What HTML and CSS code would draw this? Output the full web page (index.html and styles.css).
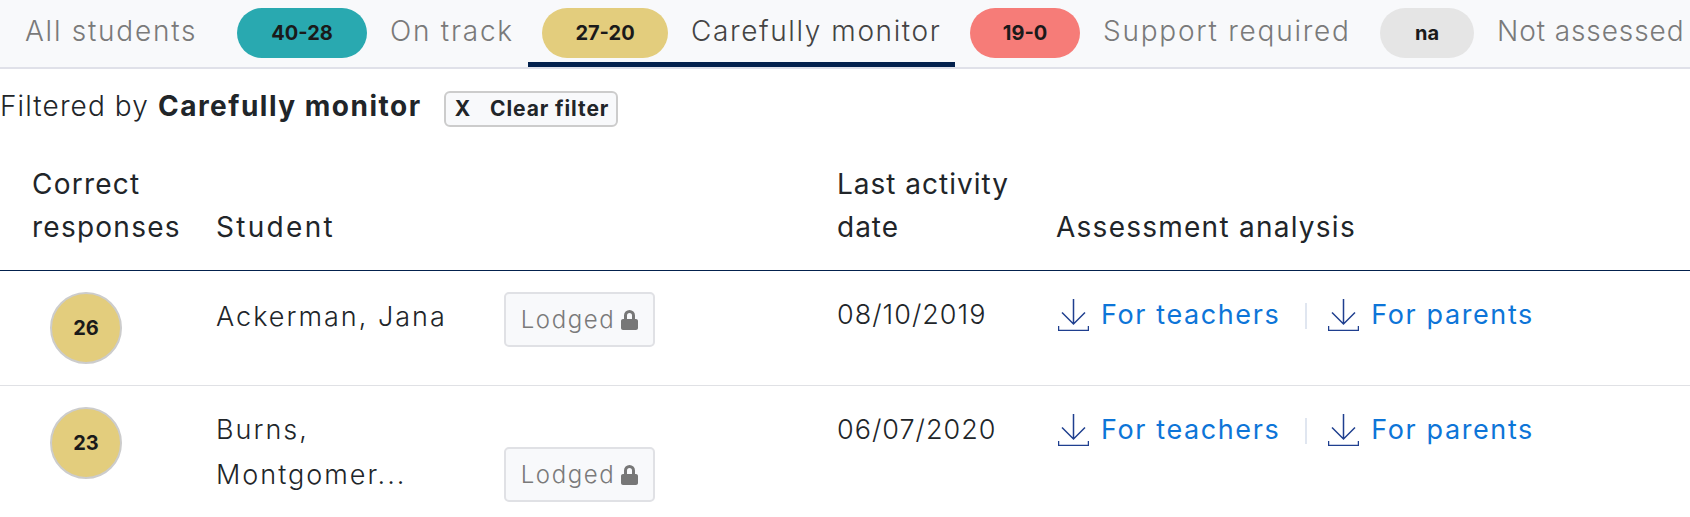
FILE: index.html
```html
<!DOCTYPE html>
<html lang="en">
<head>
<meta charset="utf-8">
<title>Assessment results</title>
<link rel="stylesheet" href="styles.css">
</head>
<body>
<nav class="tabs">
  <div class="tab tab-all"><span class="label">All students</span></div>
  <div class="tab tab-track"><span class="pill pill-teal">40-28</span><span class="label">On track</span></div>
  <div class="tab tab-monitor active"><span class="pill pill-gold">27-20</span><span class="label">Carefully monitor</span></div>
  <div class="tab tab-support"><span class="pill pill-red">19-0</span><span class="label">Support required</span></div>
  <div class="tab tab-none"><span class="pill pill-grey">na</span><span class="label label-tight">Not assessed</span></div>
</nav>
<div class="filter">
  <span class="filter-text">Filtered by <b>Carefully monitor</b></span>
  <button class="clear"><span class="clear-x">X</span><span>Clear filter</span></button>
</div>
<div class="row head">
  <div class="c-score">Correct<br>responses</div>
  <div class="c-student">Student</div>
  <div class="c-date">Last activity<br>date</div>
  <div class="c-analysis">Assessment analysis</div>
</div>
<div class="row body-row">
  <div class="c-score"><span class="score">26</span></div>
  <div class="c-student student-cell"><span class="name name-single">Ackerman, Jana</span><span class="lodged">Lodged<svg class="lock" viewBox="0 0 17 20"><path d="M3 9V5.500a5.500 5.500 0 0 1 11 0V9h1c1.100 0 2 .9 2 2v7c0 1.100-.9 2-2 2H2c-1.100 0-2-.9-2-2v-7c0-1.100.9-2 2-2zm3 0h5V5.500a2.500 2.500 0 0 0-5 0z"/></svg></span></div>
  <div class="c-date">08/10/2019</div>
  <div class="c-analysis links">
    <a class="dl"><svg class="dl-icon" viewBox="0 0 31 32"><path d="M15.500 0v25M4 13.500 15.500 25 27 13.500M.5 27v4.500h30V27"/></svg>For teachers</a>
    <span class="sep"></span>
    <a class="dl"><svg class="dl-icon" viewBox="0 0 31 32"><path d="M15.500 0v25M4 13.500 15.500 25 27 13.500M.5 27v4.500h30V27"/></svg>For parents</a>
  </div>
</div>
<div class="row body-row">
  <div class="c-score"><span class="score">23</span></div>
  <div class="c-student student-cell"><span class="name">Burns,<br>Montgomer...</span><span class="lodged">Lodged<svg class="lock" viewBox="0 0 17 20"><path d="M3 9V5.500a5.500 5.500 0 0 1 11 0V9h1c1.100 0 2 .9 2 2v7c0 1.100-.9 2-2 2H2c-1.100 0-2-.9-2-2v-7c0-1.100.9-2 2-2zm3 0h5V5.500a2.500 2.500 0 0 0-5 0z"/></svg></span></div>
  <div class="c-date">06/07/2020</div>
  <div class="c-analysis links">
    <a class="dl"><svg class="dl-icon" viewBox="0 0 31 32"><path d="M15.500 0v25M4 13.500 15.500 25 27 13.500M.5 27v4.500h30V27"/></svg>For teachers</a>
    <span class="sep"></span>
    <a class="dl"><svg class="dl-icon" viewBox="0 0 31 32"><path d="M15.500 0v25M4 13.500 15.500 25 27 13.500M.5 27v4.500h30V27"/></svg>For parents</a>
  </div>
</div>
</body>
</html>
```
FILE: styles.css
```css
* { box-sizing: border-box; }
html, body { height: 517px; overflow: hidden; }
body {
  margin: 0;
  background: #fff;
  color: #212529;
  font-family: Inter, "Liberation Sans", sans-serif;
  font-size: 27px;
  font-weight: 300;
}
.tabs {
  display: flex;
  height: 69px;
  background: #f8f9fb;
  border-bottom: 2px solid #e0e1e9;
  white-space: nowrap;
}
.tab {
  display: flex;
  align-items: flex-start;
  height: 67px;
  padding: 8px 0 0 14px;
  flex: none;
}
.tab-all { width: 223px; padding-left: 25px; }
.tab-track { width: 305px; }
.tab-monitor { width: 427px; border-bottom: 5px solid #03214d; }
.tab-support { width: 425px; padding-left: 15px; }
.tab-none { padding-left: 0; }
.label {
  color: #7a7a7a;
  font-size: 28px;
  line-height: 46px;
  letter-spacing: 1.75px;
}
.label-tight { letter-spacing: .9px; }
.active .label { color: #444; letter-spacing: 1.6px; }
.pill {
  display: flex;
  flex: none;
  align-items: center;
  justify-content: center;
  height: 50px;
  margin-right: 23px;
  border-radius: 25px;
  font-size: 20px;
  font-weight: 700;
  color: #1a1a1a;
}
.pill-teal { width: 130px; background: #29a9b0; }
.pill-gold { width: 126px; background: #e3cd7d; }
.pill-red { width: 110px; background: #f67c78; }
.pill-grey { width: 94px; background: #e5e5e5; }
.filter {
  display: flex;
  align-items: center;
  gap: 22px;
  height: 94px;
  padding-bottom: 21px;
}
.filter-text { font-size: 28px; letter-spacing: 1.100px; white-space: nowrap; }
.filter-text b { font-weight: 700; letter-spacing: 1.500px; }
.clear {
  display: flex;
  align-items: center;
  gap: 19px;
  flex: none;
  width: 174px;
  height: 36px;
  margin-top: 6px;
  padding: 0 0 0 9px;
  background: #f8f9fb;
  border: 2px solid #ccc;
  border-radius: 6px;
  color: #212529;
  font: 700 21px Inter, "Liberation Sans", sans-serif;
  letter-spacing: .9px;
  white-space: nowrap;
}
.row {
  display: grid;
  grid-template-columns: 216px 621px 219px 1fr;
}
.head {
  align-items: end;
  height: 108px;
  padding-bottom: 21px;
  border-bottom: 1px solid #03214d;
  font-size: 28px;
  line-height: 43px;
  font-weight: 400;
  letter-spacing: 1.250px;
}
.head .c-score { padding-left: 32px; }
.head .c-student { letter-spacing: 2.300px; }
.body-row {
  align-items: start;
  padding-top: 21px;
  padding-bottom: 21px;
  border-bottom: 1px solid #e0e1e5;
  line-height: 45px;
}
.c-score { padding-left: 50px; }
.score {
  display: flex;
  align-items: center;
  justify-content: center;
  width: 72px;
  height: 72px;
  background: #e3cd7d;
  border: 2px solid #ccc;
  border-radius: 50%;
  color: #1a1a1a;
  font-size: 20px;
  font-weight: 700;
}
.student-cell {
  display: grid;
  grid-template-columns: 288px 151px;
  align-items: end;
}
.name { align-self: start; padding-bottom: 5px; letter-spacing: 2px; }
.name-single { padding-top: 2px; padding-bottom: 0; }
.lodged {
  display: flex;
  align-items: center;
  justify-content: center;
  gap: 6px;
  height: 55px;
  background: #f8f9fb;
  border: 2px solid #e0e1e5;
  border-radius: 5px;
  color: #7a7a7a;
  font-size: 24px;
  letter-spacing: 1.600px;
}
.lock { width: 17px; height: 20px; fill: #777; }
.c-date { letter-spacing: 1px; }
.links {
  display: flex;
  align-items: flex-start;
  height: 45px;
  margin-left: 2px;
  letter-spacing: 1.600px;
}
.dl {
  display: flex;
  align-items: flex-start;
  color: #0d75d8;
  font-weight: 400;
  white-space: nowrap;
}
.dl-icon {
  flex: none;
  width: 31px;
  height: 32px;
  margin: 7px 12px 0 0;
  fill: none;
  stroke: #1f3f8f;
  stroke-width: 1.500;
}
.sep {
  flex: none;
  width: 2px;
  height: 26px;
  margin: 11px 21px 0 25px;
  background: #e0e6f0;
}
```
